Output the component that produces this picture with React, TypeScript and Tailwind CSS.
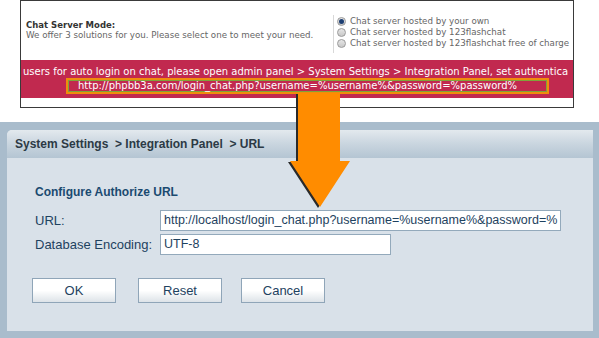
import React from 'react';

const radios = [
  { label: 'Chat server hosted by your own', on: true },
  { label: 'Chat server hosted by 123flashchat', on: false },
  { label: 'Chat server hosted by 123flashchat free of charge', on: false },
];

function Radio({ on }: { on: boolean }) {
  return (
    <span className="flex h-[9px] w-[9px] shrink-0 items-center justify-center rounded-full border border-[#9a9a9a] bg-gradient-to-b from-[#e6e6e6] to-[#c8c8c8]">
      {on && <span className="h-[5px] w-[5px] rounded-full bg-[#1d3f73]" />}
    </span>
  );
}

function Btn({ children }: { children: React.ReactNode }) {
  return (
    <button className="flex h-[25px] w-[84px] items-center justify-center border border-[#8fa5b8] bg-gradient-to-b from-white via-white to-[#dde3e8] text-[13px] text-[#1e4260]">
      {children}
    </button>
  );
}

export default function App() {
  return (
    <div className="relative h-[338px] w-[599px] overflow-hidden bg-white" style={{ fontFamily: '"Liberation Sans", Arial, sans-serif' }}>
      {/* old settings screenshot */}
      <div className="ml-[20px] flex h-[108px] w-[554px] flex-col overflow-hidden border border-[#3a3a3a] bg-white" style={{ fontFamily: '"DejaVu Sans", Verdana, sans-serif' }}>
        <div className="flex h-[59px] shrink-0">
          <div className="w-[312px] shrink-0 whitespace-nowrap pl-[5px] pt-[19px] leading-[10px]">
            <div className="text-[8.5px] font-bold text-[#333]">Chat Server Mode:</div>
            <div className="text-[8.7px] text-[#666]">We offer 3 solutions for you. Please select one to meet your need.</div>
          </div>
          <div className="mt-[14px] flex h-[38px] flex-col gap-[2px] border-l border-[#d8d8d8] pl-[3px] pt-[2px]">
            {radios.map((r) => (
              <div key={r.label} className="flex h-[9px] items-center gap-[4px] whitespace-nowrap text-[8.7px] text-[#666]">
                <Radio on={r.on} />
                {r.label}
              </div>
            ))}
          </div>
        </div>
        <div className="flex h-[38px] shrink-0 flex-col bg-[#c1294f] pt-[6px] text-white">
          <div className="whitespace-nowrap pl-[2px] text-[10px] leading-[12px]">
            users for auto login on chat, please open admin panel &gt; System Settings &gt; Integration Panel, set authentica
          </div>
          <div className="ml-[45px] flex h-[16px] w-[483px] items-center whitespace-nowrap border-2 border-[#f08c0c] pl-[10px] text-[10px] leading-[12px] shadow-[inset_0_0_0_1px_#7fa33a]">
            http://phpbb3a.com/login_chat.php?username=%username%&amp;password=%password%
          </div>
        </div>
        <div className="flex-1 bg-white" />
      </div>

      {/* integration panel */}
      <div className="mt-[14px] h-[216px] bg-[#a9bccc] pb-[7px] pl-[7px] pr-[6px] pt-[8px]">
        <div className="flex h-full flex-col overflow-hidden rounded-tl-[5px] bg-[#d9e1e9]">
          <div className="flex h-[28px] shrink-0 items-center bg-gradient-to-b from-[#e3e9ee] via-[#c9d5df] to-[#b4c5d3] pl-[8px] text-[12px] font-bold text-[#2c3a45]">
            System Settings&nbsp;&nbsp;&gt; Integration Panel&nbsp;&nbsp;&gt; URL
          </div>
          <div className="pl-[28px] pt-[25px] text-[13px] text-[#1e4260]">
            <div className="text-[12px] font-bold text-[#1b4a70]">Configure Authorize URL</div>
            <div className="mt-[9px] flex items-center">
              <span className="w-[125px]">URL:</span>
              <div className="flex h-[21px] w-[401px] items-center overflow-hidden whitespace-nowrap border border-[#93a9bb] bg-white pl-[3px] text-[12.5px]">
                http://localhost/login_chat.php?username=%username%&amp;password=%
              </div>
            </div>
            <div className="mt-[3px] flex items-center">
              <span className="w-[125px]">Database Encoding:</span>
              <div className="flex h-[21px] w-[231px] items-center border border-[#93a9bb] bg-white pl-[3px] text-[12.5px]">UTF-8</div>
            </div>
            <div className="ml-[-3px] mt-[23px] flex gap-[22px]">
              <Btn>OK</Btn>
              <Btn>Reset</Btn>
              <div className="-ml-[3px]">
                <Btn>Cancel</Btn>
              </div>
            </div>
          </div>
        </div>
      </div>

      {/* arrow */}
      <svg className="absolute left-0 top-0" width="599" height="338" viewBox="0 0 599 338">
        <polygon points="296,94 338,94 338,162 348,162 318,208 288,162 296,162" fill="#2a2a2a" />
        <polygon points="298,93 340,93 340,161 350,161 320,207 290,161 298,161" fill="#ff8c00" />
      </svg>
    </div>
  );
}
